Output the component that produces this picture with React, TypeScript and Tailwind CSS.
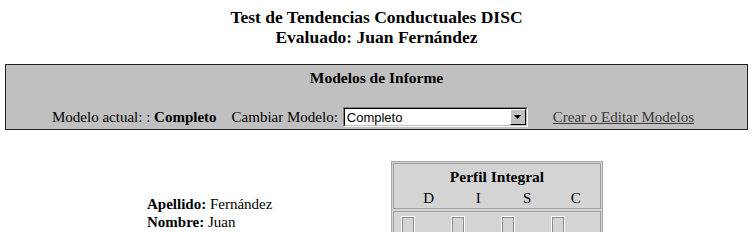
const letters = ['D', 'I', 'S', 'C']

function FakeSelect({ value }: { value: string }) {
  return (
    <div className="inline-flex h-[20px] w-[185px] items-center border border-t-[#808080] border-l-[#808080] border-b-white border-r-white">
      <div className="flex h-full flex-1 items-center border border-t-black border-l-black border-b-[#c0c0c0] border-r-[#c0c0c0] bg-white pl-[2px]">
        <span className="flex-1 font-['Liberation_Sans',sans-serif] text-[13px] leading-none">{value}</span>
        <span className="flex h-[16px] w-[16px] items-center justify-center border border-t-white border-l-white border-b-black border-r-black bg-[#c0c0c0]">
          <svg width="7" height="4" viewBox="0 0 7 4">
            <path d="M0 0h7L3.5 4z" fill="#000" />
          </svg>
        </span>
      </div>
    </div>
  )
}

export default function App() {
  return (
    <div className="w-[753px] bg-white font-['Liberation_Serif',serif] text-[15px] text-black">
      <div className="pt-[7px] text-center text-[17.5px] font-bold leading-[20px]">
        Test de Tendencias Conductuales DISC
        <br />
        Evaluado: Juan Fernández
      </div>

      <div className="mx-[5px] mt-[17px] h-[66px] border border-[#202020] bg-[#c0c0c0]">
        <div className="pt-[3px] text-center text-[15.5px] font-bold leading-[20px]">Modelos de Informe</div>
        <div className="mt-[19px] flex items-center pl-[46px] leading-[20px]">
          <span>
            Modelo actual: : <b>Completo</b>
          </span>
          <span className="ml-[15px] mr-[5px]">Cambiar Modelo:</span>
          <FakeSelect value="Completo" />
          <a href="#" className="ml-[25px] text-[#3a3a3a] underline">
            Crear o Editar Modelos
          </a>
        </div>
      </div>

      <div className="mt-[31px] flex">
        <div className="w-[391px] pl-[147px] pt-[34px] leading-[18px]">
          <div>
            <b>Apellido:</b> Fernández
          </div>
          <div>
            <b>Nombre:</b> Juan
          </div>
        </div>
        <div className="w-[212px] border border-[#a8a8a8] bg-[#d4d4d4] p-[1px]">
          <div className="h-[46px] border border-[#a0a0a0]">
            <div className="pt-[3px] text-center text-[15.5px] font-bold leading-[20px]">Perfil Integral</div>
            <div className="mt-[1px] flex pl-[10px] leading-[20px]">
              <div className="w-[51px] text-center">D</div>
              <div className="w-[51px] text-center">I</div>
              <div className="w-[50px] text-center">S</div>
              <div className="w-[50px] text-center">C</div>
            </div>
          </div>
          <div className="mt-[2px] flex h-[40px] gap-[36px] border border-[#a0a0a0] pl-[7px] pt-[4px]">
            {letters.map((l) => (
              <div key={l} className="h-[40px] w-[14px] border border-white">
                <div className="h-full border border-[#8c8c8c]" />
              </div>
            ))}
          </div>
        </div>
      </div>
    </div>
  )
}
